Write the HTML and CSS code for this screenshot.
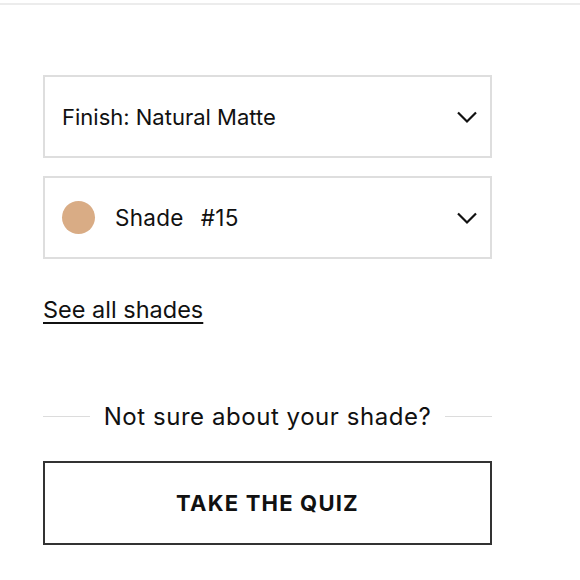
FILE: index.html
```html
<!DOCTYPE html>
<html>
<head>
    <title>Shade Selector</title>
    <link rel="stylesheet" href="styles.css">
</head>
<body>
    <div class="top-rule"></div>

    <div class="panel">
        <div class="select">
            <span class="select-label">Finish: Natural Matte</span>
            <svg class="chevron" width="22" height="14" viewBox="0 0 22 14">
                <path d="M2 2.5 L11 11.5 L20 2.5" fill="none" stroke="#111" stroke-width="2.2"/>
            </svg>
        </div>

        <div class="select">
            <span class="swatch"></span>
            <span class="select-label shade"><span class="shade-word">Shade</span>#15</span>
            <svg class="chevron" width="22" height="14" viewBox="0 0 22 14">
                <path d="M2 2.5 L11 11.5 L20 2.5" fill="none" stroke="#111" stroke-width="2.2"/>
            </svg>
        </div>

        <a class="see-all" href="#">See all shades</a>

        <div class="divider">
            <span class="divider-line"></span>
            <span class="divider-text">Not sure about your shade?</span>
            <span class="divider-line"></span>
        </div>

        <button class="quiz-btn">TAKE THE QUIZ</button>
    </div>
</body>
</html>
```

FILE: styles.css
```css
body {
    margin: 0;
    font-family: Inter, "Noto Sans", sans-serif;
    color: #111;
    background: #fff;
}
.top-rule {
    height: 2px;
    margin-top: 3px;
    background: #ececec;
}
.panel {
    width: 449px;
    margin-left: 43px;
    padding-top: 70px;
}
.select {
    display: flex;
    align-items: center;
    height: 79px;
    padding: 0 12px 0 17px;
    border: 2px solid #dedede;
    margin-bottom: 18px;
}
.select-label {
    flex: 1;
    font-size: 22px;
}
.select-label.shade {
    font-size: 22.5px;
    letter-spacing: 0.3px;
}
.shade-word {
    margin-right: 17px;
}
.swatch {
    width: 33px;
    height: 33px;
    border-radius: 50%;
    background: #d9ac85;
    margin-right: 20px;
}
.chevron {
    display: block;
    margin-top: 1px;
}
.see-all {
    display: inline-block;
    margin-top: 18px;
    font-size: 23.5px;
    color: #111;
    text-decoration: underline;
    text-underline-offset: 4px;
    text-decoration-thickness: 1.5px;
}
.divider {
    display: flex;
    align-items: center;
    gap: 14px;
    margin-top: 78px;
}
.divider-line {
    flex: 1;
    height: 1.5px;
    background: #dcdcdc;
}
.divider-text {
    font-size: 24px;
    letter-spacing: 0.55px;
}
.quiz-btn {
    display: block;
    width: 100%;
    height: 84px;
    margin-top: 30px;
    background: #fff;
    border: 2px solid #333;
    font-family: Inter, "Noto Sans", sans-serif;
    font-size: 22px;
    font-weight: 700;
    letter-spacing: 1.2px;
    color: #111;
    cursor: pointer;
}
```
